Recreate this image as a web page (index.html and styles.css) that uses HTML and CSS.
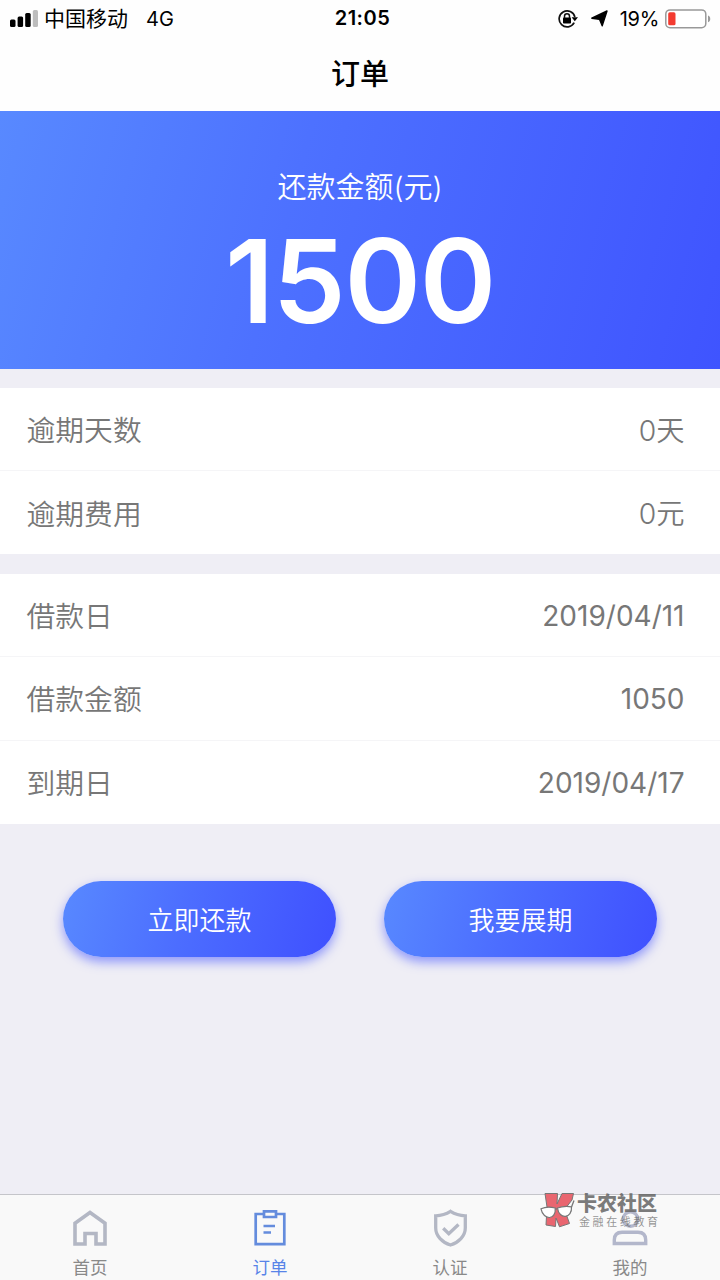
FILE: index.html
```html
<!DOCTYPE html>
<html lang="zh-CN">
<head>
<meta charset="utf-8">
<title>订单</title>
<link rel="stylesheet" href="styles.css">
</head>
<body>
<div class="screen">
  <header class="header">
    <div class="status">
      <div class="status-left">
        <svg class="signal" width="28" height="18" viewBox="0 0 28 18"><rect x="0" y="9.5" width="5.5" height="7.5" rx="1.5"/><rect x="7.6" y="6.5" width="5.5" height="10.5" rx="1.5"/><rect x="15.2" y="3" width="5.5" height="14" rx="1.5"/><rect x="22.8" y="0" width="5.2" height="17" rx="1.5" fill="#bdbdbd"/></svg>
        <span class="carrier">中国移动</span>
        <span class="network">4G</span>
      </div>
      <span class="clock">21:05</span>
      <div class="status-right">
        <svg class="lock" width="20" height="18" viewBox="0 0 20 18"><path d="M16.2 12.7A8 8 0 1 1 16.9 7" fill="none" stroke="#111" stroke-width="1.7"/><path d="M13.6 7.2H20L16.8 11.2Z"/><rect x="5" y="7.6" width="8" height="6" rx=".8"/><path d="M6.5 8V6.2a2.5 2.5 0 0 1 5 0V8" fill="none" stroke="#111" stroke-width="1.5"/></svg>
        <svg class="arrow" width="17" height="17" viewBox="0 0 17 17"><path d="M16 1 11.2 15.8 8.6 9.4.8 8.2Z" stroke="#000" stroke-width="1.4" stroke-linejoin="round"/></svg>
        <span class="percent">19%</span>
        <svg class="battery" width="46" height="20" viewBox="0 0 46 20"><rect x=".8" y=".9" width="40" height="17.8" rx="4.2" fill="#fff" stroke="#999" stroke-width="1.5"/><rect x="3.2" y="3.3" width="7.3" height="13" rx="1.6" fill="#f33b30"/><path d="M43 6.5c3 1 3 5.8 0 6.8Z" fill="#999"/></svg>
      </div>
    </div>
    <h1 class="title">订单</h1>
  </header>
  <section class="hero">
    <div class="hero-label">还款金额(元)</div>
    <div class="hero-amount">1500</div>
  </section>
  <section class="group overdue">
    <div class="row"><span class="label">逾期天数</span><span class="value">0天</span></div>
    <div class="row"><span class="label">逾期费用</span><span class="value">0元</span></div>
  </section>
  <section class="group">
    <div class="row"><span class="label">借款日</span><span class="value number">2019/04/11</span></div>
    <div class="row"><span class="label">借款金额</span><span class="value number">1050</span></div>
    <div class="row"><span class="label">到期日</span><span class="value number">2019/04/17</span></div>
  </section>
  <div class="actions">
    <button class="button">立即还款</button>
    <button class="button">我要展期</button>
  </div>
  <nav class="tabs">
    <a class="tab"><svg class="icon" width="40" height="40" viewBox="0 0 40 40"><path d="M5 16.2 20 5.5 35 16.2V37H26V26.5H15V37H5Z" fill="none" stroke="#b3b7c4" stroke-width="3.6"/></svg><span>首页</span></a>
    <a class="tab active"><svg class="icon" width="40" height="40" viewBox="0 0 40 40"><path d="M14 7H5.7V37.2H34.3V7H26M14 4.3H26V10H14ZM13.5 19H25M13.5 25.5H21" fill="none" stroke="#648cdd" stroke-width="2.7"/></svg><span>订单</span></a>
    <a class="tab"><svg class="icon" width="40" height="40" viewBox="0 0 40 40"><path d="M20.5 4.3C15.5 7.4 11 8.5 5.7 8.8V21C5.7 29 12.5 35.7 20.5 38 28.5 35.7 35.3 29 35.3 21V8.8C30 8.5 25.5 7.4 20.5 4.3ZM13.2 21.2 18.8 26.7 28.5 17.5" fill="none" stroke="#b3b7c4" stroke-width="3.3"/></svg><span>认证</span></a>
    <a class="tab"><svg class="icon" width="40" height="40" viewBox="0 0 40 40"><circle cx="20.5" cy="12" r="7.2" fill="none" stroke="#b3b7cb" stroke-width="3.4"/><path d="M4.3 36.5V33Q4.3 25.2 12 25.2H28Q35.7 25.2 35.7 33V36.5Z" fill="none" stroke="#b3b7cb" stroke-width="3.4"/></svg><span>我的</span></a>
  </nav>
  <div class="watermark">
    <svg width="36" height="36" viewBox="0 0 36 36"><path d="M5 1.5H17.5L17 12 22 1.5H33.5L32 8 24.5 17.5 29.5 31.5 19.5 34.8 16 26 15.5 34.5 6 33 7 15Z" fill="#e96670" stroke="#777" stroke-width="1"/><path d="M1 16.8Q7 14 15.2 16C16.5 28 3.5 29 1 16.8ZM17.5 16Q24 13.5 31.5 14.8C32.5 26.5 19 28 17.5 16Z" fill="#fff" stroke="#777" stroke-width="1.2"/><path d="M15.2 17 17.5 16.8M31.5 15 34 8.5" stroke="#777" stroke-width="1.3"/></svg>
    <div class="watermark-text"><div class="watermark-name">卡农社区</div><div class="watermark-sub">金融在线教育</div></div>
  </div>
</div>
</body>
</html>
```
FILE: styles.css
```css
* { box-sizing: border-box; }
body { margin: 0; font-family: Inter, "Noto Sans CJK SC", sans-serif; }
.screen {
  position: relative;
  display: flex;
  flex-direction: column;
  width: 720px;
  height: 1280px;
  overflow: hidden;
  background: #efeef5;
}
.header { height: 111px; background: #fefefe; color: #000; }
.status {
  display: grid;
  grid-template-columns: 1fr auto 1fr;
  align-items: center;
  height: 37px;
  padding: 0 9px 0 10px;
  font-size: 20px;
  line-height: 37px;
}
.status-left, .status-right { display: flex; align-items: center; height: 36px; }
.status-right { justify-content: flex-end; }
.carrier { margin-left: 6px; font-size: 21px; line-height: 36px; }
.network { margin-left: 18px; padding-top: 1px; }
.clock { font-weight: 600; letter-spacing: .5px; padding-left: 4px; }
.arrow { margin-left: 13px; }
.percent { margin: 0 6px 0 12px; padding-top: 1px; letter-spacing: -.3px; }
.title {
  margin: 0;
  font-size: 29px;
  font-weight: 500;
  line-height: 74px;
  text-align: center;
  padding-top: 1px;
}
.hero {
  height: 258px;
  padding-top: 55px;
  background: linear-gradient(105deg, #5889ff 0%, #4d71ff 40%, #3f54ff 100%);
  color: #fff;
  text-align: center;
}
.hero-label { font-size: 29px; font-weight: 350; line-height: 44px; }
.hero-amount {
  margin-top: 2px;
  font-size: 116px;
  font-weight: 600;
  line-height: 138px;
  letter-spacing: -1.3px;
}
.group { margin-bottom: 20px; background: #fff; }
.overdue { margin-top: 19px; }
.row {
  display: flex;
  justify-content: space-between;
  align-items: center;
  height: 83.3px;
  padding: 0 35.5px 0 26.5px;
  border-bottom: 1px solid #f5f5f7;
  color: #777;
  font-size: 28.8px;
}
.overdue .row { height: 83px; }
.row:last-child { border-bottom: 0; }
.label { font-weight: 350; padding-bottom: 1px; }
.value { font-weight: 350; font-size: 28.3px; }
.number { font-weight: 400; font-size: 28px; padding-top: 1px; }
.overdue .value { padding-bottom: 2px; }
.actions { display: flex; gap: 48px; padding: 37.5px 63px 0; }
.button {
  width: 273px;
  height: 75.5px;
  padding: 0 0 1px;
  border: 0;
  border-radius: 38px;
  background: linear-gradient(105deg, #5889ff 0%, #4c6dff 45%, #3f50ff 100%);
  box-shadow: 0 5px 11px rgba(63, 80, 255, .55);
  color: #fff;
  font: 350 26px Inter, "Noto Sans CJK SC", sans-serif;
}
.tabs {
  display: grid;
  grid-template-columns: repeat(4, 1fr);
  height: 86px;
  margin-top: auto;
  border-top: 1px solid #c5c5ca;
  background: #f9f9f9;
}
.tab {
  display: flex;
  flex-direction: column;
  align-items: center;
  padding-top: 12px;
  color: #898989;
  font-size: 17.5px;
  line-height: 26px;
}
.tab span { margin-top: 8px; }
.active { color: #5884e8; }
.watermark {
  position: absolute;
  left: 540px;
  top: 1192px;
  display: flex;
  color: rgba(100, 100, 100, .85);
}
.watermark-text { margin-left: 1px; white-space: nowrap; }
.watermark-name { font-size: 20px; font-weight: 900; line-height: 24px; }
.watermark-sub { padding-left: 2px; font-size: 11px; line-height: 12px; letter-spacing: 2.6px; opacity: .8; }
```
